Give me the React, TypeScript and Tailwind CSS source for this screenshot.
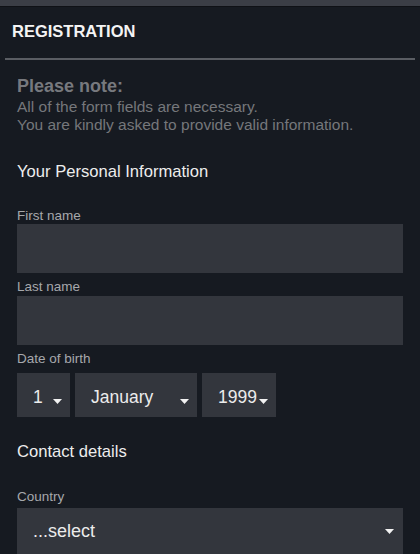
import React from "react";

const Arrow = ({ className = "" }: { className?: string }) => (
  <svg width="9" height="5" viewBox="0 0 9 5" className={className}>
    <path d="M0 0 L9 0 L4.5 5 Z" fill="#f2f2f2" />
  </svg>
);

const Select = ({ value, w }: { value: string; w: string }) => (
  <div className={`flex h-[44px] items-center justify-between bg-[#33363d] pl-[16px] pr-[8px] ${w}`}>
    <span className="mt-[4px] text-[17.5px] leading-[22px] text-[#ececec]">{value}</span>
    <Arrow className="mt-[12px]" />
  </div>
);

export default function App() {
  return (
    <div
      className="h-[554px] w-[420px] overflow-hidden bg-[#161a21]"
      style={{ fontFamily: '"Liberation Sans", Arial, sans-serif' }}
    >
      <div className="h-[6px] bg-[#3b3e46]" />
      <div className="h-[1px] bg-[#0f1116]" />
      <div className="pl-[12px] pt-[14px]">
        <div className="text-[16.5px] font-bold leading-[20px] text-[#f4f4f4]">REGISTRATION</div>
      </div>
      <div className="mx-[5px] mt-[17px] h-[2px] bg-[#5a5d63]" />
      <div className="flex flex-col px-[17px]">
        <div className="mt-[15px] text-[18px] font-bold leading-[22px] text-[#77797e]">Please note:</div>
        <div className="mt-[1px] text-[15.5px] leading-[18px] text-[#75777b]">
          <div>All of the form fields are necessary.</div>
          <div>You are kindly asked to provide valid information.</div>
        </div>
        <div className="mt-[28px] text-[16.6px] leading-[20px] text-[#ededed]">Your Personal Information</div>

        <div className="mt-[26px] h-[16px] text-[13.5px] leading-[16px] text-[#a6a8ac]">First name</div>
        <div className="h-[49px] bg-[#33363d]" />

        <div className="mt-[6px] h-[16px] text-[13.5px] leading-[16px] text-[#a6a8ac]">Last name</div>
        <div className="mt-[1px] h-[49px] bg-[#33363d]" />

        <div className="mt-[6px] h-[16px] text-[13.5px] leading-[16px] text-[#a6a8ac]">Date of birth</div>
        <div className="mt-[6px] flex gap-[5px]">
          <Select value="1" w="w-[53px]" />
          <Select value="January" w="w-[122px]" />
          <Select value="1999" w="w-[74px]" />
        </div>

        <div className="mt-[25px] text-[16.6px] leading-[20px] text-[#ededed]">Contact details</div>

        <div className="mt-[27px] h-[16px] text-[13.5px] leading-[16px] text-[#a6a8ac]">Country</div>
        <div className="mt-[3px] flex h-[49px] items-center justify-between bg-[#33363d] pl-[16px] pr-[9px]">
          <span className="mb-[3px] text-[18px] leading-[22px] text-[#ececec]">...select</span>
          <Arrow className="mb-[2px]" />
        </div>
      </div>
    </div>
  );
}
